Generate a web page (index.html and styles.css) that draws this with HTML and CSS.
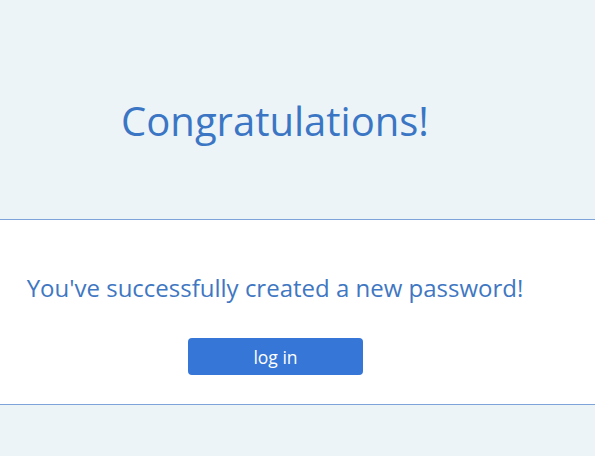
FILE: index.html
```html
<!DOCTYPE html>
<html lang="en">
<head>
  <meta charset="UTF-8" />
  <meta name="viewport" content="width=device-width, initial-scale=1.0"/>
  <title>Password Changed</title>
  <link rel="stylesheet" href="styles.css">
</head>
<body>
  <div class="header">
    <h1>Congratulations!</h1>
  </div>

  <div class="message">
    <p>You've successfully created a new password!</p>
    <button type="button" class="login-btn">log in</button>
  </div>

  <div class="footer"></div>
</body>
</html>
```

FILE: styles.css
```css
body {
  margin: 0;
  font-family: "Open Sans", "Noto Sans", sans-serif;
  background-color: #ecf4f8;
}
.header {
  height: 219px;
  width: 550px;
  box-sizing: border-box;
  padding-top: 22px;
  display: flex;
  align-items: center;
  justify-content: center;
}
h1 {
  margin: 0;
  font-size: 40px;
  font-weight: normal;
  color: #3b76c4;
}
.message {
  background: #fff;
  border-top: 1px solid #7ea3da;
  border-bottom: 1px solid #7ea3da;
  height: 186px;
  width: 100%;
  box-sizing: border-box;
}
.message p {
  width: 550px;
  text-align: center;
  margin: 0;
  padding-top: 51px;
  font-size: 24px;
  color: #3f77c2;
}
.login-btn {
  display: block;
  margin: 34px 0 0 188px;
  width: 175px;
  height: 37px;
  background-color: #3576d6;
  color: white;
  border: none;
  border-radius: 4px;
  font-family: inherit;
  font-size: 17.5px;
  cursor: pointer;
}
.footer {
  height: 51px;
}
```
